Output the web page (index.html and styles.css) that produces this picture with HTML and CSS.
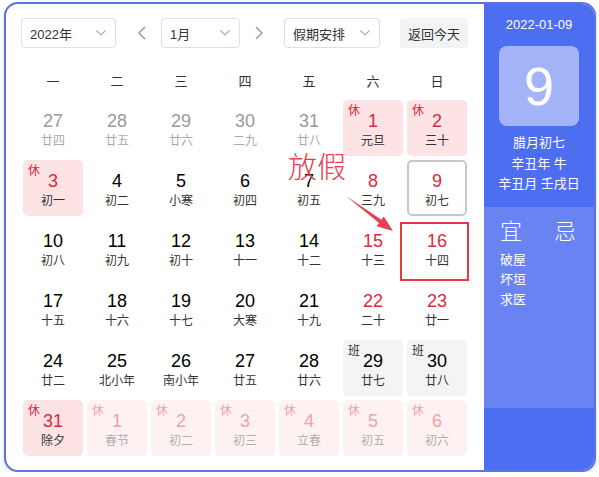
FILE: index.html
```html
<!DOCTYPE html>
<html lang="zh">
<head>
<meta charset="utf-8">
<link rel="stylesheet" href="styles.css">
</head>
<body>
<div class="cal">
  <div class="main">
    <div class="toolbar">
      <div class="select sel-year"><span>2022年</span><svg class="chev" viewBox="0 0 10 6"><path d="M0.5 0.5 L5 5 L9.5 0.5" /></svg></div>
      <div class="arrow arrow-prev"><svg viewBox="0 0 8 14"><path d="M7 1 L1 7 L7 13" /></svg></div>
      <div class="select sel-month"><span>1月</span><svg class="chev" viewBox="0 0 10 6"><path d="M0.5 0.5 L5 5 L9.5 0.5" /></svg></div>
      <div class="arrow arrow-next"><svg viewBox="0 0 8 14"><path d="M1 1 L7 7 L1 13" /></svg></div>
      <div class="select sel-hol"><span>假期安排</span><svg class="chev" viewBox="0 0 10 6"><path d="M0.5 0.5 L5 5 L9.5 0.5" /></svg></div>
      <div class="btn-today">返回今天</div>
    </div>
    <div class="weekdays">
      <div>一</div><div>二</div><div>三</div><div>四</div><div>五</div><div>六</div><div>日</div>
    </div>
    <div class="grid">
      <div class="cell other"><div class="num">27</div><div class="lunar">廿四</div></div>
      <div class="cell other"><div class="num">28</div><div class="lunar">廿五</div></div>
      <div class="cell other"><div class="num">29</div><div class="lunar">廿六</div></div>
      <div class="cell other"><div class="num">30</div><div class="lunar">二九</div></div>
      <div class="cell other"><div class="num">31</div><div class="lunar">廿八</div></div>
      <div class="cell rest red"><span class="tag">休</span><div class="num">1</div><div class="lunar">元旦</div></div>
      <div class="cell rest red"><span class="tag">休</span><div class="num">2</div><div class="lunar">三十</div></div>

      <div class="cell rest red"><span class="tag">休</span><div class="num">3</div><div class="lunar">初一</div></div>
      <div class="cell"><div class="num">4</div><div class="lunar">初二</div></div>
      <div class="cell"><div class="num">5</div><div class="lunar">小寒</div></div>
      <div class="cell"><div class="num">6</div><div class="lunar">初四</div></div>
      <div class="cell"><div class="num">7</div><div class="lunar">初五</div></div>
      <div class="cell red"><div class="num">8</div><div class="lunar">三九</div></div>
      <div class="cell red today"><div class="num">9</div><div class="lunar">初七</div></div>

      <div class="cell"><div class="num">10</div><div class="lunar">初八</div></div>
      <div class="cell"><div class="num">11</div><div class="lunar">初九</div></div>
      <div class="cell"><div class="num">12</div><div class="lunar">初十</div></div>
      <div class="cell"><div class="num">13</div><div class="lunar">十一</div></div>
      <div class="cell"><div class="num">14</div><div class="lunar">十二</div></div>
      <div class="cell red"><div class="num">15</div><div class="lunar">十三</div></div>
      <div class="cell red"><div class="num">16</div><div class="lunar">十四</div></div>

      <div class="cell"><div class="num">17</div><div class="lunar">十五</div></div>
      <div class="cell"><div class="num">18</div><div class="lunar">十六</div></div>
      <div class="cell"><div class="num">19</div><div class="lunar">十七</div></div>
      <div class="cell"><div class="num">20</div><div class="lunar">大寒</div></div>
      <div class="cell"><div class="num">21</div><div class="lunar">十九</div></div>
      <div class="cell red"><div class="num">22</div><div class="lunar">二十</div></div>
      <div class="cell red"><div class="num">23</div><div class="lunar">廿一</div></div>

      <div class="cell"><div class="num">24</div><div class="lunar">廿二</div></div>
      <div class="cell"><div class="num">25</div><div class="lunar">北小年</div></div>
      <div class="cell"><div class="num">26</div><div class="lunar">南小年</div></div>
      <div class="cell"><div class="num">27</div><div class="lunar">廿五</div></div>
      <div class="cell"><div class="num">28</div><div class="lunar">廿六</div></div>
      <div class="cell work"><span class="tag">班</span><div class="num">29</div><div class="lunar">廿七</div></div>
      <div class="cell work"><span class="tag">班</span><div class="num">30</div><div class="lunar">廿八</div></div>

      <div class="cell rest red"><span class="tag">休</span><div class="num">31</div><div class="lunar">除夕</div></div>
      <div class="cell rest-other"><span class="tag">休</span><div class="num">1</div><div class="lunar">春节</div></div>
      <div class="cell rest-other"><span class="tag">休</span><div class="num">2</div><div class="lunar">初二</div></div>
      <div class="cell rest-other"><span class="tag">休</span><div class="num">3</div><div class="lunar">初三</div></div>
      <div class="cell rest-other"><span class="tag">休</span><div class="num">4</div><div class="lunar">立春</div></div>
      <div class="cell rest-other"><span class="tag">休</span><div class="num">5</div><div class="lunar">初五</div></div>
      <div class="cell rest-other"><span class="tag">休</span><div class="num">6</div><div class="lunar">初六</div></div>
    </div>
    <div class="note-text">放假</div>
    <svg class="note-arrow" viewBox="0 0 599 477"><polygon points="346,196 381.4,219.8 383.8,216.6 393,231 376.6,226.2 379,223" /></svg>
    <div class="note-box"></div>
  </div>
  <div class="side">
    <div class="side-date">2022-01-09</div>
    <div class="big-day">9</div>
    <div class="side-lunar">
      <div>腊月初七</div>
      <div>辛丑年 牛</div>
      <div>辛丑月 壬戌日</div>
    </div>
    <div class="yiji">
      <div class="yiji-col">
        <div class="yiji-head">宜</div>
        <div class="yiji-item">破屋</div>
        <div class="yiji-item">坏垣</div>
        <div class="yiji-item">求医</div>
      </div>
      <div class="yiji-col">
        <div class="yiji-head">忌</div>
      </div>
    </div>
  </div>
</div>
</body>
</html>
```

FILE: styles.css
```css
html, body {
  margin: 0;
  padding: 0;
  background: #ffffff;
}
body {
  font-family: "Liberation Sans", "Noto Sans CJK SC", sans-serif;
  color: #333;
}
.cal {
  margin: 2px 0 0 4px;
  width: 592px;
  height: 470px;
  box-sizing: border-box;
  border: 2px solid #5a76dc;
  border-radius: 14px;
  overflow: hidden;
  display: flex;
  box-shadow: 0 2px 5px rgba(60, 80, 160, 0.18);
  background: #fff;
}
.main {
  position: relative;
  width: 478px;
  flex: none;
  box-sizing: border-box;
  padding: 14px 0 0 15px;
}
.toolbar {
  display: flex;
  align-items: center;
  height: 30px;
}
.select {
  box-sizing: border-box;
  height: 30px;
  border: 1px solid #dcdfe6;
  border-radius: 4px;
  display: flex;
  align-items: center;
  justify-content: space-between;
  padding: 0 9px 0 8px;
  font-size: 13px;
  color: #333;
}
.sel-year { width: 95px; }
.sel-month { width: 79px; }
.sel-hol { width: 96px; }
.chev {
  width: 10px;
  height: 6px;
  fill: none;
  stroke: #a8abb2;
  stroke-width: 1.1;
}
.arrow {
  width: 14px;
  height: 30px;
  display: flex;
  align-items: center;
  justify-content: center;
}
.arrow svg {
  width: 8px;
  height: 14px;
  fill: none;
  stroke: #9a9a9a;
  stroke-width: 1.5;
}
.arrow-prev { margin: 0 12px 0 19px; }
.arrow-next { margin: 0 18px 0 12px; }
.btn-today {
  margin-left: 20px;
  width: 68px;
  height: 30px;
  border-radius: 4px;
  background: #f2f3f5;
  font-size: 13px;
  display: flex;
  align-items: center;
  justify-content: center;
  color: #333;
}
.weekdays {
  margin: 18px 0 6px 2px;
  display: grid;
  grid-template-columns: repeat(7, 60px);
  column-gap: 4px;
  height: 28px;
  align-items: center;
  font-size: 13px;
  color: #333;
}
.weekdays div { text-align: center; }
.grid {
  margin-left: 2px;
  display: grid;
  grid-template-columns: repeat(7, 60px);
  grid-auto-rows: 56px;
  gap: 4px;
}
.cell {
  position: relative;
  box-sizing: border-box;
  padding-top: 10px;
  border-radius: 5px;
  text-align: center;
}
.num {
  font-size: 18px;
  line-height: 22px;
  color: #000;
}
.lunar {
  font-size: 12px;
  line-height: 18px;
  color: #333;
}
.tag {
  position: absolute;
  left: 5px;
  top: 4px;
  font-size: 12px;
  line-height: 14px;
}
.other .num { color: #999; }
.other .lunar { color: #aaa; }
.red .num { color: #e1283a; }
.rest { background: #fde3e4; }
.rest .tag { color: #e1283a; }
.rest-other { background: #fdf1f1; }
.rest-other .num, .rest-other .tag { color: #f0a2ab; }
.rest-other .lunar { color: #b0b0b0; }
.work { background: #f4f4f5; }
.work .tag { color: #333; }
.today {
  border: 2px solid #c6c8cd;
  padding-top: 8px;
  border-radius: 5px;
}
.note-text {
  position: absolute;
  left: 282px;
  top: 146px;
  font-size: 29px;
  line-height: 36px;
  font-weight: 300;
  color: #e8404f;
  letter-spacing: 0;
}
.note-arrow {
  position: absolute;
  left: -6px;
  top: -4px;
  width: 599px;
  height: 477px;
  fill: #e8404f;
  pointer-events: none;
}
.note-box {
  position: absolute;
  left: 394px;
  top: 218px;
  width: 69px;
  height: 59px;
  box-sizing: border-box;
  border: 2px solid #e5393f;
}
.side {
  flex: 1;
  min-width: 0;
  background: #4e6ef2;
  color: #fff;
  display: flex;
  flex-direction: column;
  align-items: center;
}
.side-date {
  margin-top: 12px;
  font-size: 13px;
  line-height: 18px;
}
.big-day {
  margin-top: 12px;
  width: 80px;
  height: 80px;
  border-radius: 8px;
  background: #a4b4f8;
  font-size: 54px;
  line-height: 80px;
  text-align: center;
}
.side-lunar {
  margin-top: 7px;
  font-size: 13px;
  line-height: 20.5px;
  text-align: center;
  white-space: nowrap;
}
.yiji {
  margin-top: 12px;
  align-self: stretch;
  height: 201px;
  background: #6983f3;
  box-sizing: border-box;
  padding: 11px 0 0 16px;
  display: flex;
}
.yiji-col { width: 54px; flex: none; }
.yiji-col + .yiji-col { width: 30px; }
.yiji-head {
  font-size: 22px;
  line-height: 28px;
  font-weight: 300;
  margin-bottom: 4px;
}
.yiji-item {
  font-size: 13px;
  line-height: 20px;
}
```
